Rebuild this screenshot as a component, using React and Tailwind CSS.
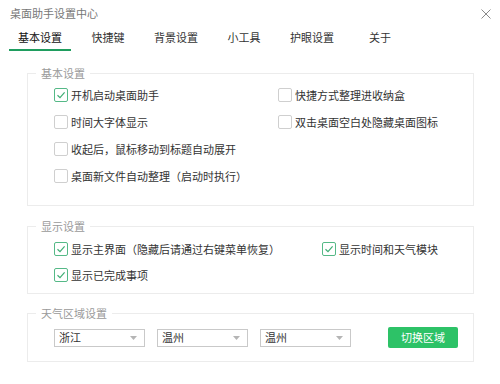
import React from 'react'

const font = { fontFamily: '"Noto Sans CJK SC", "Noto Sans", sans-serif' }

const tabs = ['基本设置', '快捷键', '背景设置', '小工具', '护眼设置', '关于']

const Checkbox = ({ checked, label }) => (
  <label className="flex items-center gap-[3px] text-[11px] leading-[14px] text-[#333]">
    <span
      className={`flex h-[14px] w-[14px] items-center justify-center rounded-[2px] border bg-white ${
        checked ? 'border-[#55b987]' : 'border-[#cfcfcf]'
      }`}
    >
      {checked && (
        <svg width="10" height="10" viewBox="0 0 10 10" fill="none">
          <path d="M1.5 5.2 L4 7.6 L8.6 2.4" stroke="#3fae74" strokeWidth="1.2" />
        </svg>
      )}
    </span>
    {label}
  </label>
)

const Select = ({ value }) => (
  <div className="flex h-[18px] w-[91px] items-center justify-between border border-[#c9c9c9] pl-[4px] pr-[7px] text-[11px] text-[#333]">
    <span>{value}</span>
    <svg width="7" height="4" viewBox="0 0 7 4">
      <path d="M0 0 L7 0 L3.5 4 Z" fill="#b5b5b5" />
    </svg>
  </div>
)

const Group = ({ title, children, className }) => (
  <fieldset className={`ml-[27px] mr-[26px] border border-[#ececec] ${className}`}>
    <legend className="ml-[8px] px-[5px] text-[11px] leading-[14px] text-[#9a9a9a]">{title}</legend>
    {children}
  </fieldset>
)

export default function App() {
  return (
    <div className="h-[384px] w-[500px] bg-white [text-spacing-trim:space-all]" style={font}>
      {/* Title bar */}
      <div className="flex h-[27px] items-center justify-between pl-[10px] pr-[9px]">
        <span className="text-[11px] text-[#777]">桌面助手设置中心</span>
        <svg width="10" height="10" viewBox="0 0 10 10">
          <path d="M0.5 0.5 L9.5 9.5 M9.5 0.5 L0.5 9.5" stroke="#8a8a8a" strokeWidth="1" />
        </svg>
      </div>

      {/* Tabs */}
      <div className="flex pl-[6px]">
        {tabs.map((t, i) => (
          <div key={t} className="flex w-[68px] flex-col items-center pt-[3px]">
            <span className={`text-[11px] leading-[14px] ${i === 0 ? 'text-[#111]' : 'text-[#333]'}`}>{t}</span>
            <div className={`mt-[5px] h-[2px] w-[62px] ${i === 0 ? 'bg-[#1f9d5f]' : ''}`} />
          </div>
        ))}
      </div>

      {/* 基本设置 */}
      <Group title="基本设置" className="mt-[15px] pb-[16px]">
        <div className="grid grid-cols-[224px_1fr] pl-[26px] pt-[1px]">
          <div className="flex h-[27px] items-center"><Checkbox checked label="开机启动桌面助手" /></div>
          <div className="flex h-[27px] items-center"><Checkbox label="快捷方式整理进收纳盒" /></div>
          <div className="flex h-[27px] items-center"><Checkbox label="时间大字体显示" /></div>
          <div className="flex h-[27px] items-center"><Checkbox label="双击桌面空白处隐藏桌面图标" /></div>
          <div className="col-span-2 flex h-[27px] items-center"><Checkbox label="收起后，鼠标移动到标题自动展开" /></div>
          <div className="col-span-2 flex h-[27px] items-center"><Checkbox label="桌面新文件自动整理（启动时执行）" /></div>
        </div>
      </Group>

      {/* 显示设置 */}
      <Group title="显示设置" className="mt-[13px] pb-[5px]">
        <div className="grid grid-cols-[268px_1fr] pl-[26px] pt-[3px]">
          <div className="flex h-[26px] items-center"><Checkbox checked label="显示主界面（隐藏后请通过右键菜单恢复）" /></div>
          <div className="flex h-[26px] items-center"><Checkbox checked label="显示时间和天气模块" /></div>
          <div className="col-span-2 flex h-[26px] items-center"><Checkbox checked label="显示已完成事项" /></div>
        </div>
      </Group>

      {/* 天气区域设置 */}
      <Group title="天气区域设置" className="mt-[12px] pb-[13px]">
        <div className="flex items-center pl-[26px] pt-[7px]">
          <div className="flex gap-[12px]">
            <Select value="浙江" />
            <Select value="温州" />
            <Select value="温州" />
          </div>
          <button className="ml-[37px] h-[21px] w-[70px] rounded-[2px] bg-[#2dc267] text-[11px] text-white">
            切换区域
          </button>
        </div>
      </Group>
    </div>
  )
}
